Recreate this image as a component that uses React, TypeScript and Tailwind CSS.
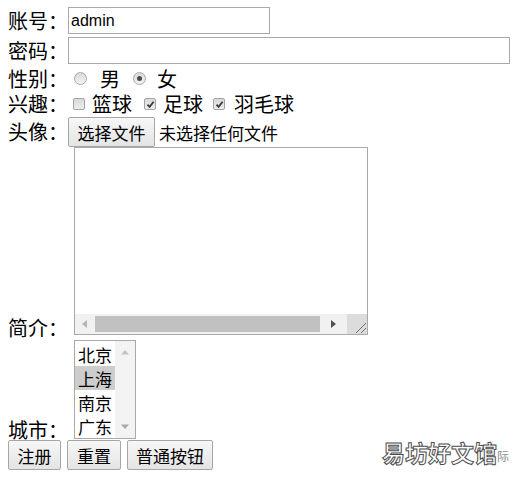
import type { ReactNode } from 'react'

const cjk = "font-['Noto_Sans_CJK_SC','Liberation_Sans',sans-serif]"

function Label({ children }: { children: ReactNode }) {
  return <span className="w-[60px] shrink-0 text-[20px] leading-none">{children}</span>
}

function Radio({ checked }: { checked?: boolean }) {
  return (
    <span className="flex h-[13px] w-[13px] shrink-0 items-center justify-center rounded-full border border-[#a7a7a7] bg-gradient-to-b from-[#d9d9d9] to-[#f4f4f4]">
      {checked && <span className="h-[5px] w-[5px] rounded-full bg-[#4a4a4a]" />}
    </span>
  )
}

function Checkbox({ checked }: { checked?: boolean }) {
  return (
    <span className="flex h-[12px] w-[12px] shrink-0 items-center justify-center rounded-[2px] border border-[#a3a3a3] bg-gradient-to-b from-[#dadada] to-[#ececec]">
      {checked && (
        <svg width="9" height="9" viewBox="0 0 9 9">
          <path d="M1.5 4.6 L3.6 6.8 L7.6 1.8" fill="none" stroke="#3a3a3a" strokeWidth="1.8" />
        </svg>
      )}
    </span>
  )
}

function Btn({ children, className = '' }: { children: ReactNode; className?: string }) {
  return (
    <button
      type="button"
      className={`h-full shrink-0 rounded-[2px] border border-[#a6a6a6] bg-gradient-to-b from-[#f7f7f7] to-[#e4e4e4] text-[17px] leading-none text-black ${className}`}
    >
      {children}
    </button>
  )
}

const cities = ['北京', '上海', '南京', '广东']

export default function App() {
  return (
    <div className={`relative h-[486px] w-[526px] overflow-hidden bg-white pl-2 pt-[7px] text-black ${cjk}`}>
      {/* 账号 */}
      <div className="flex h-[27px] items-center">
        <Label>账号：</Label>
        <input
          defaultValue="admin"
          className="h-[27px] w-[202px] border border-[#a9a9a9] px-[2px] font-['Liberation_Sans',sans-serif] text-[16px] outline-none"
        />
      </div>

      {/* 密码 */}
      <div className="mt-[3px] flex h-[27px] items-center">
        <Label>密码：</Label>
        <input type="password" className="h-[27px] w-[442px] border border-[#a9a9a9] px-[2px] text-[16px] outline-none" />
      </div>

      {/* 性别 */}
      <div className="flex h-[27px] items-center pt-[2px] text-[20px] leading-none">
        <Label>性别：</Label>
        <span className="ml-[6px]"><Radio /></span>
        <span className="ml-[13px]">男</span>
        <span className="ml-[13px]"><Radio checked /></span>
        <span className="ml-[11px]">女</span>
      </div>

      {/* 兴趣 */}
      <div className="flex h-[26px] items-center text-[20px] leading-none">
        <Label>兴趣：</Label>
        <span className="ml-[5px]"><Checkbox /></span>
        <span className="ml-[7px]">篮球</span>
        <span className="ml-[12px]"><Checkbox checked /></span>
        <span className="ml-[7px]">足球</span>
        <span className="ml-[10px]"><Checkbox checked /></span>
        <span className="ml-[9px]">羽毛球</span>
      </div>

      {/* 头像 */}
      <div className="flex h-[30px] items-center">
        <Label>头像：</Label>
        <Btn className="w-[87px]">选择文件</Btn>
        <span className="ml-[4px] text-[17px] leading-none">未选择任何文件</span>
      </div>

      {/* 简介 */}
      <div className="flex items-end">
        <span className="mb-[-3px] w-[60px] shrink-0 text-[20px] leading-none">简介：</span>
        <div className="ml-[6px] flex h-[188px] w-[294px] flex-col border border-[#a9a9a9] bg-white">
          <div className="flex-1" />
          <div className="flex h-[20px]">
            <div className="flex flex-1 items-center bg-[#f1f1f1]">
              <svg width="20" height="20" viewBox="0 0 20 20" className="shrink-0">
                <path d="M12 6 L7 10 L12 14 Z" fill="#b5b5b5" />
              </svg>
              <div className="h-[16px] flex-1 bg-[#c1c1c1]" />
              <svg width="27" height="20" viewBox="0 0 27 20" className="shrink-0">
                <path d="M11 6 L16 10 L11 14 Z" fill="#505050" />
              </svg>
            </div>
            <div className="flex w-[20px] items-end justify-end bg-[#dcdcdc]">
              <svg width="14" height="14" viewBox="0 0 14 14">
                <path d="M3 13 L13 3 M8 13 L13 8" stroke="#707070" strokeWidth="1" />
              </svg>
            </div>
          </div>
        </div>
      </div>

      {/* 城市 */}
      <div className="mt-[5px] flex items-end">
        <span className="mb-[-1px] w-[60px] shrink-0 text-[20px] leading-none">城市：</span>
        <div className="ml-[6px] flex h-[99px] w-[62px] border border-[#a9a9a9] bg-white">
          <div className="flex w-[40px] flex-col pt-px">
            {cities.map(c => (
              <div
                key={c}
                className={`flex h-[24px] items-center pl-[3px] text-[17px] leading-none ${c === '上海' ? 'bg-[#cdcdcd]' : ''}`}
              >
                {c}
              </div>
            ))}
          </div>
          <div className="flex flex-1 flex-col items-center justify-between bg-[#f3f3f3] py-[8px]">
            <svg width="10" height="6" viewBox="0 0 10 6">
              <path d="M1 5.5 L5 1 L9 5.5 Z" fill="#c3c3c3" />
            </svg>
            <svg width="10" height="6" viewBox="0 0 10 6">
              <path d="M1 0.5 L5 5 L9 0.5 Z" fill="#a8a8a8" />
            </svg>
          </div>
        </div>
      </div>

      {/* 按钮 */}
      <div className="mt-[1px] flex h-[30px] gap-[6px]">
        <Btn className="w-[53px]">注册</Btn>
        <Btn className="w-[54px]">重置</Btn>
        <Btn className="w-[86px]">普通按钮</Btn>
      </div>

      {/* 水印 */}
      <div className="absolute left-[382px] top-[441px] flex items-end">
        <span className="text-[23px] font-bold leading-none text-white [-webkit-text-stroke:1px_#4d4d4d]">易坊好文馆</span>
        <span className="mb-[2px] text-[12px] leading-none text-[#8a8a8a]">际</span>
      </div>
    </div>
  )
}
